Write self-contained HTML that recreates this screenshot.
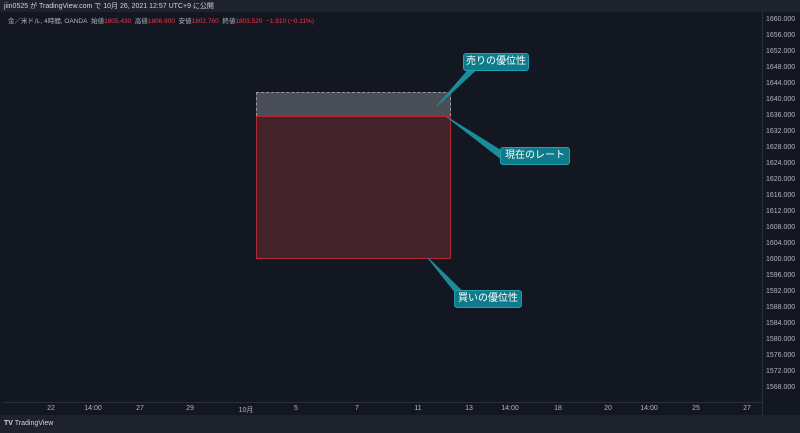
<!DOCTYPE html><html><head><meta charset="utf-8"><style>
body{margin:0;width:800px;height:433px;background:#131722;overflow:hidden;position:relative;font-family:"Liberation Sans","Noto Sans CJK JP",sans-serif;color:#b2b5be}
.a{position:absolute}
.p{position:absolute;left:766px;font-size:7px;color:#b2b5be}
.t{position:absolute;top:405px;font-size:7px;color:#b2b5be;transform:translateX(-50%)}
.c{position:absolute;background:#0f7a8a;color:#fff;font-size:10px;border-radius:3px;border:1px solid #23a0ad;text-align:center;line-height:16px}
</style></head><body>
<div class="a" style="left:0;top:0;width:800px;height:12px;background:#1e222d"></div>
<div class="a" style="left:4px;top:1px;font-size:7px;color:#d1d4dc">jiin0525 が TradingView.com で 10月 26, 2021 12:57 UTC+9 に公開</div>
<div class="a" style="left:8px;top:15px;font-size:6.5px;color:#b2b5be">金／米ドル, 4時間, OANDA&nbsp; 始値<span style="color:#f23645">1805.430</span>&nbsp; 高値<span style="color:#f23645">1806.900</span>&nbsp; 安値<span style="color:#f23645">1802.760</span>&nbsp; 終値<span style="color:#f23645">1803.520&nbsp; −1.910 (−0.11%)</span></div>
<div class="a" style="left:762px;top:12px;width:1px;height:403px;background:#2a2e39"></div>
<div class="a" style="left:3px;top:402px;width:759px;height:1px;background:#2a2e39"></div>
<div class="a" style="left:0;top:415px;width:800px;height:18px;background:#1e222d"></div>
<div class="a" style="left:4px;top:420px;font-size:7px;color:#d1d4dc"><b>TV</b> TradingView</div>
<div class="a" style="left:256px;top:92px;width:193px;height:23px;background:#4a4e57;border:1px dashed #9598a1;border-bottom:none"></div>
<div class="a" style="left:256px;top:116px;width:193px;height:141px;background:#43232a;border:1px solid #b22833"></div>
<svg class="a" style="left:0;top:0" width="800" height="433"><g stroke="#1b8d9a" fill="#1b8d9a"><polygon points="437,106 470,68 478,68"/><polygon points="447,117 500,150 500,158"/><polygon points="428,258 455,292 463,292"/></g></svg>
<div class="c" style="left:463px;top:53px;width:64px">売りの優位性</div>
<div class="c" style="left:500px;top:147px;width:68px">現在のレート</div>
<div class="c" style="left:454px;top:290px;width:66px">買いの優位性</div>
<div class="p" style="top:16px">1660.000</div><div class="p" style="top:32px">1656.000</div><div class="p" style="top:48px">1652.000</div><div class="p" style="top:64px">1648.000</div><div class="p" style="top:80px">1644.000</div><div class="p" style="top:96px">1640.000</div><div class="p" style="top:112px">1636.000</div><div class="p" style="top:128px">1632.000</div><div class="p" style="top:144px">1628.000</div><div class="p" style="top:160px">1624.000</div><div class="p" style="top:176px">1620.000</div><div class="p" style="top:192px">1616.000</div><div class="p" style="top:208px">1612.000</div><div class="p" style="top:224px">1608.000</div><div class="p" style="top:240px">1604.000</div><div class="p" style="top:256px">1600.000</div><div class="p" style="top:272px">1596.000</div><div class="p" style="top:288px">1592.000</div><div class="p" style="top:304px">1588.000</div><div class="p" style="top:320px">1584.000</div><div class="p" style="top:336px">1580.000</div><div class="p" style="top:352px">1576.000</div><div class="p" style="top:368px">1572.000</div><div class="p" style="top:384px">1568.000</div>
<div class="t" style="left:51px">22</div><div class="t" style="left:93px">14:00</div><div class="t" style="left:140px">27</div><div class="t" style="left:190px">29</div><div class="t" style="left:246px">10月</div><div class="t" style="left:296px">5</div><div class="t" style="left:357px">7</div><div class="t" style="left:418px">11</div><div class="t" style="left:469px">13</div><div class="t" style="left:510px">14:00</div><div class="t" style="left:558px">18</div><div class="t" style="left:608px">20</div><div class="t" style="left:649px">14:00</div><div class="t" style="left:696px">25</div><div class="t" style="left:747px">27</div>
</body></html>
